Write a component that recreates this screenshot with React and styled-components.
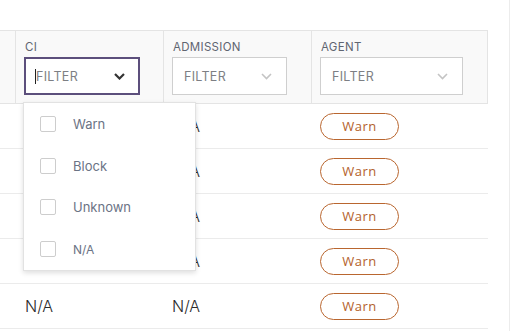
import styled, { createGlobalStyle } from 'styled-components';

const Global = createGlobalStyle`
	html, body {
		margin: 0;
		background: #fff;
		font-family: Inter, "Liberation Sans", sans-serif;
	}
`;

const Page = styled.div`
	width: 510px;
	height: 331px;
	padding-top: 30px;
	box-sizing: border-box;
	border-right: 1px solid #ececec;
	overflow: hidden;
`;

const Table = styled.div`
	position: relative;
	width: 488px;
	display: grid;
	grid-template-columns: 15px 148px 148px 177px;
`;

const HeadCell = styled.div`
	background: #f9f9f9;
	border-top: 1px solid #e4e4e4;
	border-bottom: 1px solid #e4e4e4;
	border-left: ${(p) => (p.$first ? 'none' : '1px solid #e4e4e4')};
	border-right: ${(p) => (p.$last ? '1px solid #e4e4e4' : 'none')};
	height: 62px;
	padding: 10px 0 0 ${(p) => p.$pad ?? 8}px;
	display: flex;
	flex-direction: column;
	gap: 3px;
`;

const Label = styled.div`
	font-size: 11.5px;
	line-height: 13px;
	color: #5f6571;
	letter-spacing: 0.3px;
	padding-left: 1px;
`;

const FilterBox = styled.div`
	position: relative;
	width: ${(p) => p.$w}px;
	height: 38px;
	box-sizing: border-box;
	border: ${(p) => (p.$active ? '2px solid #5c4f7c' : '1px solid #cfcfcf')};
	background: #fff;
	display: flex;
	align-items: center;
	justify-content: space-between;
	padding: ${(p) => (p.$active ? '0 13px 0 10px' : '0 14px 0 11px')};
`;

const Placeholder = styled.span`
	font-size: 12.5px;
	color: #7d7f84;
	letter-spacing: 0.3px;
`;

const Caret = styled.span`
	position: absolute;
	left: 9px;
	top: 10px;
	width: 1px;
	height: 15px;
	background: #222;
`;

const Cell = styled.div`
	height: 44px;
	border-bottom: 1px solid #ebebeb;
	display: flex;
	align-items: center;
	padding-left: ${(p) => p.$pad ?? 10}px;
	font-size: 16px;
	font-weight: 300;
	color: #2b2b2b;
`;

const WarnBtn = styled.div`
	width: 79px;
	height: 27px;
	box-sizing: border-box;
	border: 1px solid #b9662f;
	border-radius: 14px;
	color: #b3612b;
	font-family: "Open Sans", Lato, sans-serif;
	font-size: 13px;
	font-weight: 500;
	letter-spacing: 0.5px;
	display: flex;
	align-items: center;
	justify-content: center;
`;

const Menu = styled.div`
	position: absolute;
	left: 23px;
	top: 72px;
	width: 173px;
	height: 169px;
	box-sizing: border-box;
	background: #fff;
	border: 1px solid #e2e2e2;
	box-shadow: 0 2px 5px rgba(0, 0, 0, 0.13);
	display: flex;
	flex-direction: column;
`;

const Option = styled.div`
	height: 42px;
	display: flex;
	align-items: center;
	gap: 17px;
	padding-left: 16px;
`;

const Box = styled.span`
	width: 16px;
	height: 16px;
	box-sizing: border-box;
	border: 1px solid #cdcdcd;
	border-radius: 2px;
	background: #fff;
`;

const OptText = styled.span`
	font-size: ${(p) => (p.$small ? 12 : 13)}px;
	color: #6b7385;
`;

const Chevron = ({ dark }) => (
	<svg width="11" height="7" viewBox="0 0 11 7">
		<path
			d="M1 1 L5.5 5.5 L10 1"
			fill="none"
			stroke={dark ? '#333' : '#c4c4c4'}
			strokeWidth={dark ? 2.2 : 1.6}
		/>
	</svg>
);

const rows = [1, 2, 3, 4, 5];
const options = ['Warn', 'Block', 'Unknown', 'N/A'];

function Row() {
	return (
		<>
			<Cell $pad={0} />
			<Cell>N/A</Cell>
			<Cell $pad={9}>N/A</Cell>
			<Cell $pad={9}>
				<WarnBtn>Warn</WarnBtn>
			</Cell>
		</>
	);
}

function App() {
	return (
		<>
			<Global />
			<Page>
				<Table>
					<HeadCell $first $pad={0} />
					<HeadCell>
						<Label>CI</Label>
						<FilterBox $w={116} $active>
							<Caret />
							<Placeholder>FILTER</Placeholder>
							<Chevron dark />
						</FilterBox>
					</HeadCell>
					<HeadCell>
						<Label>ADMISSION</Label>
						<FilterBox $w={115}>
							<Placeholder>FILTER</Placeholder>
							<Chevron />
						</FilterBox>
					</HeadCell>
					<HeadCell $last>
						<Label>AGENT</Label>
						<FilterBox $w={143}>
							<Placeholder>FILTER</Placeholder>
							<Chevron />
						</FilterBox>
					</HeadCell>

					{rows.map((r) => (
						<Row key={r} />
					))}

					<Menu>
						{options.map((o) => (
							<Option key={o}>
								<Box />
								<OptText $small={o === 'N/A'}>{o}</OptText>
							</Option>
						))}
					</Menu>
				</Table>
			</Page>
		</>
	);
}

export default App;
